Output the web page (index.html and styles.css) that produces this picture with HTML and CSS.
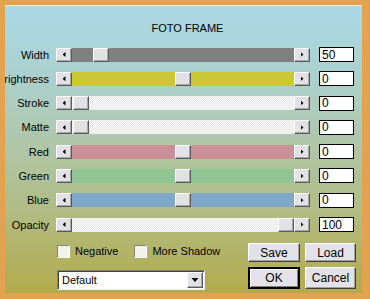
FILE: index.html
```html
<!DOCTYPE html>
<html lang="en">
<head>
    <meta charset="utf-8">
    <title>Foto Frame</title>
    <link rel="stylesheet" href="styles.css">
</head>
<body>
<div class="frame">
    <div class="panel">
        <h1 class="title">FOTO FRAME</h1>
        <div class="rows">
            <div class="row">
                <span class="label">Width</span>
                <div class="slider">
                    <span class="btn"><i class="arrow left"></i></span>
                    <div class="track gray"><span class="thumb" style="margin-left:21px"></span></div>
                    <span class="btn"><i class="arrow right"></i></span>
                </div>
                <input class="val" type="text" value="50">
            </div>
            <div class="row">
                <span class="label">Brightness</span>
                <div class="slider">
                    <span class="btn"><i class="arrow left"></i></span>
                    <div class="track yellow"><span class="thumb" style="margin-left:103px"></span></div>
                    <span class="btn"><i class="arrow right"></i></span>
                </div>
                <input class="val" type="text" value="0">
            </div>
            <div class="row">
                <span class="label">Stroke</span>
                <div class="slider">
                    <span class="btn"><i class="arrow left"></i></span>
                    <div class="track dots"><span class="thumb" style="margin-left:1px"></span></div>
                    <span class="btn"><i class="arrow right"></i></span>
                </div>
                <input class="val" type="text" value="0">
            </div>
            <div class="row">
                <span class="label">Matte</span>
                <div class="slider">
                    <span class="btn"><i class="arrow left"></i></span>
                    <div class="track dots"><span class="thumb" style="margin-left:1px"></span></div>
                    <span class="btn"><i class="arrow right"></i></span>
                </div>
                <input class="val" type="text" value="0">
            </div>
            <div class="row">
                <span class="label">Red</span>
                <div class="slider">
                    <span class="btn"><i class="arrow left"></i></span>
                    <div class="track red"><span class="thumb" style="margin-left:103px"></span></div>
                    <span class="btn"><i class="arrow right"></i></span>
                </div>
                <input class="val" type="text" value="0">
            </div>
            <div class="row">
                <span class="label">Green</span>
                <div class="slider">
                    <span class="btn"><i class="arrow left"></i></span>
                    <div class="track green"><span class="thumb" style="margin-left:103px"></span></div>
                    <span class="btn"><i class="arrow right"></i></span>
                </div>
                <input class="val" type="text" value="0">
            </div>
            <div class="row">
                <span class="label">Blue</span>
                <div class="slider">
                    <span class="btn"><i class="arrow left"></i></span>
                    <div class="track blue"><span class="thumb" style="margin-left:103px"></span></div>
                    <span class="btn"><i class="arrow right"></i></span>
                </div>
                <input class="val" type="text" value="0">
            </div>
            <div class="row">
                <span class="label">Opacity</span>
                <div class="slider">
                    <span class="btn"><i class="arrow left"></i></span>
                    <div class="track dots"><span class="thumb" style="margin-left:206px"></span></div>
                    <span class="btn"><i class="arrow right"></i></span>
                </div>
                <input class="val" type="text" value="100">
            </div>
        </div>
        <div class="bottom">
            <div class="checks">
                <label class="check"><span class="box"></span>Negative</label>
                <label class="check"><span class="box"></span>More Shadow</label>
            </div>
            <button class="push" type="button">Save</button>
            <button class="push" type="button">Load</button>
            <div class="select">
                <span class="selval">Default</span>
                <span class="drop"><i class="arrow down"></i></span>
            </div>
            <button class="push ok" type="button">OK</button>
            <button class="push cancel" type="button">Cancel</button>
        </div>
    </div>
</div>
</body>
</html>
```

FILE: styles.css
```css
body {
    margin:0;
    background-color:#e2a250;
    font-family:"Liberation Sans", Arial, sans-serif;
    font-size:11px;
    color:#000;
}
.frame {
    padding:5px 8px 6px 5px;
}
.panel {
    height:287px;
    border-top:1px solid #f2e6d0;
    background:linear-gradient(#aad9e7 0%, #abd0cc 25%, #afc6a6 50%, #b1bb82 72%, #b2ab4c 100%);
    overflow:hidden;
    display:flex;
    flex-direction:column;
}
.title {
    margin:16px 0 0 8px;
    height:13px;
    line-height:13px;
    font-size:11px;
    font-weight:normal;
    text-align:center;
}
.rows {
    margin-top:12px;
    display:flex;
    flex-direction:column;
    gap:9.3px;
}
.row {
    display:flex;
    align-items:center;
    height:15px;
}
.label {
    width:44px;
    flex:none;
    display:flex;
    justify-content:flex-end;
    white-space:nowrap;
    margin-right:7px;
}
.slider {
    display:flex;
    width:254px;
    height:14px;
    margin-right:9px;
}
.btn, .thumb, .drop {
    box-sizing:border-box;
    width:16px;
    height:14px;
    flex:none;
    background-color:#e2e2e6;
    border:1px solid;
    border-color:#fff #5a5a5a #5a5a5a #fff;
    box-shadow:inset -1px -1px #a8a8a8;
    display:flex;
    align-items:center;
    justify-content:center;
}
.track {
    flex:1;
    display:flex;
}
.gray { background-color:#808080; }
.yellow { background-color:#cac834; }
.red { background-color:#c99098; }
.green { background-color:#8fc592; }
.blue { background-color:#7fa7c7; }
.dots {
    background:repeating-conic-gradient(#e6e6e6 0 25%, #fbfbfb 0 50%) 0 0/2px 2px;
}
.arrow {
    display:block;
    background-color:#000;
}
.arrow.left {
    width:3px;
    height:5px;
    clip-path:polygon(100% 0, 100% 100%, 0 50%);
}
.arrow.right {
    width:3px;
    height:5px;
    clip-path:polygon(0 0, 0 100%, 100% 50%);
}
.arrow.down {
    width:7px;
    height:4px;
    clip-path:polygon(0 0, 100% 0, 50% 100%);
}
.val {
    box-sizing:border-box;
    width:35px;
    height:15px;
    margin:0;
    padding:0 2px;
    border:1px solid #000;
    background-color:#fff;
    font-family:"Liberation Sans", Arial, sans-serif;
    font-size:12px;
    line-height:13px;
}
.bottom {
    margin:11px 0 0 52px;
    display:grid;
    grid-template-columns:186px 52px 51px;
    grid-template-rows:19px 22px;
    column-gap:5px;
    row-gap:5px;
}
.checks {
    display:flex;
    align-items:center;
    gap:16px;
    margin-top:1px;
    height:14px;
}
.check {
    display:flex;
    align-items:center;
    gap:5px;
    white-space:nowrap;
}
.box {
    box-sizing:border-box;
    width:13px;
    height:13px;
    background-color:#f2f2ea;
    border:1px solid;
    border-color:#858575 #fff #fff #858575;
}
.push {
    box-sizing:border-box;
    margin:0;
    padding:0;
    background-color:#e2e2e8;
    border:1px solid;
    border-color:#fff #404040 #404040 #fff;
    box-shadow:inset -1px -1px #a0a0a0;
    font-family:"Liberation Sans", Arial, sans-serif;
    font-size:12px;
    color:#000;
}
.ok {
    border:2px solid #000;
    box-shadow:inset 1px 1px #fff, inset -1px -1px #808080;
}
.select {
    box-sizing:border-box;
    width:148px;
    height:20px;
    margin-top:3px;
    display:flex;
    align-items:center;
    background-color:#fff;
    border:1px solid;
    border-color:#808080 #f0f0f0 #f0f0f0 #808080;
    box-shadow:inset 1px 1px #404040;
    padding:0 1px 0 4px;
}
.selval {
    flex:1;
    font-size:11px;
}
.drop {
    height:16px;
}
```
